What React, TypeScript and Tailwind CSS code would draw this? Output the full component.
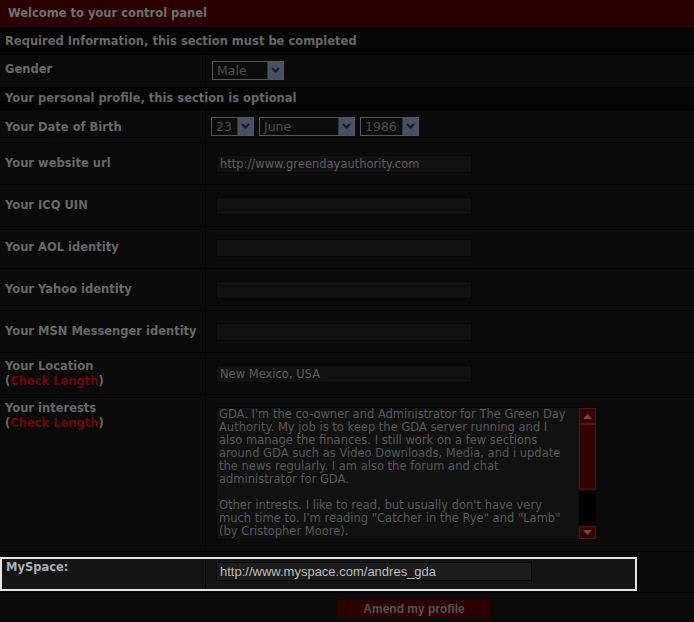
import React from "react";

const V = { fontFamily: '"DejaVu Sans", Verdana, sans-serif' };

function Sel({ w, text }: { w: string; text: string }) {
  return (
    <div className={`flex h-[19px] border border-[#555555] bg-[#0c0c0c] ${w}`}>
      <div className="flex-1 pl-[4px] text-[12.5px] leading-[17px] text-[#4e4e4e]" style={V}>
        {text}
      </div>
      <div className="flex w-[16px] items-center justify-center border-l border-[#333] bg-[#485062]">
        <svg width="9" height="6" viewBox="0 0 9 6">
          <path d="M1 1 L4.5 4.5 L8 1" stroke="#151a26" strokeWidth="2" fill="none" />
        </svg>
      </div>
    </div>
  );
}

function Inp({ value }: { value?: string }) {
  return (
    <div
      className="ml-[10px] h-[18px] w-[256px] border border-[#060606] bg-[#111111] pl-[3px] text-[11.5px] leading-[16px] text-[#5e5e5e]"
      style={V}
    >
      {value}
    </div>
  );
}

function Label({ children }: { children: React.ReactNode }) {
  return (
    <div className="pl-[5px] text-[11.5px] font-bold leading-[15px] text-[#686868]" style={V}>
      {children}
    </div>
  );
}

function Row({ label, children }: { label: React.ReactNode; children?: React.ReactNode }) {
  return (
    <div className="flex h-[42px] border-b border-[#000] bg-[#0a0a0a]">
      <div className="flex w-[206px] items-center border-r border-[#000]">
        <Label>{label}</Label>
      </div>
      <div className="flex flex-1 items-center">{children}</div>
    </div>
  );
}

const CL = (
  <>
    (<span className="text-[#6a0808]">Check Length</span>)
  </>
);

export default function App() {
  return (
    <div className="h-[622px] w-[694px] overflow-hidden bg-[#0a0a0a]">
      <div className="flex h-[28px] items-center border-b border-[#140000] bg-[#2a0000] pl-[8px]">
        <span className="text-[11.5px] font-bold leading-[15px] text-[#707070]" style={V}>
          Welcome to your control panel
        </span>
      </div>
      <div className="flex h-[27px] items-center border-b border-[#000] bg-[#040404] pl-[5px]">
        <span className="text-[11.5px] font-bold leading-[15px] text-[#686868]" style={V}>
          Required Information, this section must be completed
        </span>
      </div>
      <div className="flex h-[33px] border-b border-[#000] bg-[#0a0a0a]">
        <div className="flex w-[206px] items-start border-r border-[#000] pt-[7px]">
          <Label>Gender</Label>
        </div>
        <div className="flex flex-1 items-center pl-[6px] pb-[2px]">
          <Sel w="w-[72px]" text="Male" />
        </div>
      </div>
      <div className="flex h-[22px] items-center border-b border-[#000] bg-[#040404] pl-[5px]">
        <span className="text-[11.5px] font-bold leading-[15px] text-[#686868]" style={V}>
          Your personal profile, this section is optional
        </span>
      </div>
      <div className="flex h-[33px] border-b border-[#000] bg-[#0a0a0a]">
        <div className="flex w-[206px] items-center border-r border-[#000] pt-[2px]">
          <Label>Your Date of Birth</Label>
        </div>
        <div className="flex flex-1 items-center gap-[5px] pl-[5px]">
          <Sel w="w-[43px]" text="23" />
          <Sel w="w-[96px]" text="June" />
          <Sel w="w-[59px]" text="1986" />
        </div>
      </div>
      <Row label="Your website url">
        <Inp value="http://www.greendayauthority.com" />
      </Row>
      <Row label="Your ICQ UIN">
        <Inp />
      </Row>
      <Row label="Your AOL identity">
        <Inp />
      </Row>
      <Row label="Your Yahoo identity">
        <Inp />
      </Row>
      <Row label="Your MSN Messenger identity">
        <Inp />
      </Row>
      <Row
        label={
          <>
            Your Location
            <br />
            {CL}
          </>
        }
      >
        <Inp value="New Mexico, USA" />
      </Row>
      <div className="flex h-[157px] border-b border-[#000] bg-[#0a0a0a]">
        <div className="w-[206px] border-r border-[#000] pt-[6px]">
          <Label>
            Your interests
            <br />
            {CL}
          </Label>
        </div>
        <div className="flex-1 pl-[10px] pt-[12px]">
          <div className="flex h-[133px] w-[381px] border border-[#060606] bg-[#111111]">
            <div
              className="flex-1 overflow-hidden pl-[2px] pr-[5px] text-[11.5px] leading-[13px] text-[#595959]"
              style={V}
            >
              GDA. I'm the co-owner and Administrator for The Green Day Authority. My job is to keep the GDA server
              running and I also manage the finances. I still work on a few sections around GDA such as Video
              Downloads, Media, and i update the news regularly. I am also the forum and chat administrator for GDA.
              <br />
              <br />
              Other intrests. I like to read, but usually don't have very much time to. I'm reading "Catcher in the
              Rye" and "Lamb" (by Cristopher Moore).
            </div>
            <div className="flex w-[17px] flex-col bg-[#000]">
              <div className="flex h-[16px] items-center justify-center border border-[#5a1515] bg-[#3a0000]">
                <svg width="9" height="5" viewBox="0 0 9 5">
                  <path d="M0 5 L4.5 0 L9 5 Z" fill="#6b4a4a" />
                </svg>
              </div>
              <div className="h-[66px] border border-[#5a1515] bg-[#340000]" />
              <div className="flex-1" />
              <div className="flex h-[13px] items-center justify-center border border-[#5a1515] bg-[#3a0000]">
                <svg width="9" height="5" viewBox="0 0 9 5">
                  <path d="M0 0 L4.5 5 L9 0 Z" fill="#6b4a4a" />
                </svg>
              </div>
            </div>
          </div>
        </div>
      </div>
      <div className="h-[5px] bg-[#0a0a0a]" />
      <div className="flex h-[36px] border-b border-[#000] bg-[#0a0a0a]">
        <div className="flex h-[34px] w-[637px] border-2 border-[#e4e4e4] bg-[#141414]">
          <div className="w-[204px] border-r border-[#050505] pl-[4px] pt-[1px]">
            <div className="text-[11.5px] font-bold leading-[15px] text-[#a9b0b8]" style={V}>
              MySpace:
            </div>
          </div>
          <div className="flex-1 pl-[10px] pt-[3px]">
            <div
              className="h-[19px] w-[316px] border border-[#050505] bg-[#1c1c1c] pl-[3px] text-[13px] leading-[17px] text-[#bdbdbd]"
              style={{ fontFamily: '"Liberation Sans", Arial, sans-serif' }}
            >
              http://www.myspace.com/andres_gda
            </div>
          </div>
        </div>
      </div>
      <div className="bg-[#0a0a0a] pl-[337px] pt-[6px]">
        <div
          className="flex h-[19px] w-[154px] items-center justify-center bg-[#2a0000] text-[12px] font-bold text-[#555555]"
          style={{ fontFamily: '"Liberation Sans", Arial, sans-serif' }}
        >
          Amend my profile
        </div>
      </div>
    </div>
  );
}
